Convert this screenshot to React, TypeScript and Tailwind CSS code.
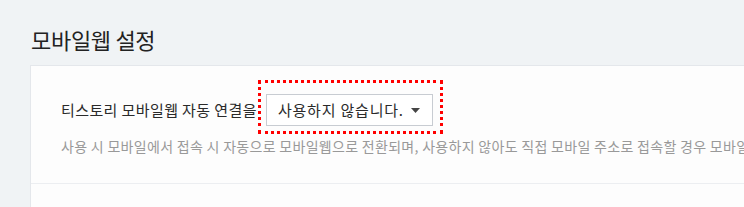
import React from 'react';

const font = { fontFamily: '"Noto Sans CJK KR", "Noto Sans", sans-serif' };

export default function App() {
  return (
    <div
      className="w-[744px] h-[207px] overflow-hidden bg-[#f0f3f5] pl-[30px] pt-[24px]"
      style={font}
    >
      {/* page title */}
      <h2 className="text-[22px] leading-[30px] text-[#222] ml-[1px] mb-[11px] tracking-[-0.3px]">모바일웹 설정</h2>

      <div className="bg-[#fdfdfd] border border-r-0 border-[#e4e7eb]">
        <div className="pl-[30px] pt-[28px] pb-[26px] border-b border-[#eceef1]">
          <div className="flex items-center">
            <span className="text-[15px] text-[#2a2a2a] tracking-[0.4px] whitespace-nowrap">티스토리 모바일웹 자동 연결을</span>
            <div className="relative ml-[9px]">
              <div className="flex items-center justify-between w-[167px] h-[32px] border border-[#c8ccd2] bg-white pl-[11px] pr-[12px]">
                <span className="text-[15px] text-[#2a2a2a] tracking-[0.8px] whitespace-nowrap">사용하지 않습니다.</span>
                <svg width="9" height="5" viewBox="0 0 9 5" className="text-[#444]">
                  <path d="M0 0h9L4.5 5z" fill="currentColor" />
                </svg>
              </div>
              {/* annotation frame */}
              <div className="absolute -left-[8px] -top-[14px] w-[185px] h-[54px] border-[3px] border-dotted border-[#f00] pointer-events-none" />
            </div>
          </div>
          <p className="mt-[10px] text-[14px] text-[#999] tracking-[0.3px] whitespace-nowrap">
            사용 시 모바일에서 접속 시 자동으로 모바일웹으로 전환되며, 사용하지 않아도 직접 모바일 주소로 접속할 경우 모바일웹으로 보여집니다.
          </p>
        </div>
        <div className="h-[60px]" />
      </div>
    </div>
  );
}
